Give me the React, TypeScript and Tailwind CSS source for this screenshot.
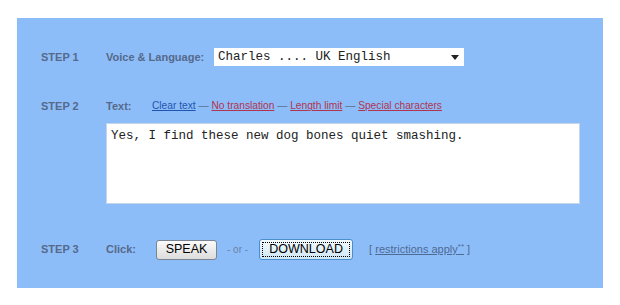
import React from 'react';

const label = "w-[65px] shrink-0 text-[11px] font-bold text-[#55698a]";

export default function App() {
  return (
    <div className="w-[620px] h-[305px] bg-white pt-[18px] pl-[17px] font-['Liberation_Sans',Arial,sans-serif]">
      <div className="w-[586px] h-[270px] bg-[#8dbdf9] pl-[24px] pt-[30px] flex flex-col">
        {/* step 1 */}
        <div className="flex items-center h-[18px]">
          <div className={label}>STEP 1</div>
          <div className="w-[108px] text-[11px] font-bold text-[#55698a]">Voice &amp; Language:</div>
          <div className="w-[250px] h-[18px] bg-white flex items-center justify-between pl-[4px] pr-[5px]">
            <span className="font-['Liberation_Mono','Courier_New',monospace] text-[12.5px] text-[#222] whitespace-pre">Charles .... UK English</span>
            <svg width="8" height="5" viewBox="0 0 8 5"><path d="M0 0h8L4 5z" fill="#222" /></svg>
          </div>
        </div>

        {/* step 2 */}
        <div className="flex items-center h-[12px] mt-[34px]">
          <div className={label}>STEP 2</div>
          <div className="w-[46px] text-[11px] font-bold text-[#55698a]">Text:</div>
          <div className="text-[10.2px] text-[#5c6f8c] whitespace-pre">
            <a className="underline text-[#1f55b0]">Clear text</a> — <a className="underline text-[#b0344f]">No translation</a> — <a className="underline text-[#b0344f]">Length limit</a> — <a className="underline text-[#b0344f]">Special characters</a>
          </div>
        </div>
        <div className="ml-[65px] mt-[11px] w-[474px] h-[81px] bg-white border border-[#c6d6ea] px-[4px] pt-[3px] font-['Liberation_Mono','Courier_New',monospace] text-[12.5px] text-[#222]">
          Yes, I find these new dog bones quiet smashing.
        </div>

        {/* step 3 */}
        <div className="flex items-center h-[21px] mt-[35px]">
          <div className={label}>STEP 3</div>
          <div className="w-[50px] text-[11px] font-bold text-[#55698a]">Click:</div>
          <button className="w-[61px] h-[20px] rounded-[3px] border border-[#7a8594] bg-gradient-to-b from-[#fbfbfb] to-[#dcdcdc] text-[12.5px] text-black leading-none">SPEAK</button>
          <span className="ml-[10px] mr-[11px] text-[10px] text-[#6a82a6]">- or -</span>
          <button className="w-[94px] h-[21px] rounded-[3px] border border-[#4a8fc9] bg-gradient-to-b from-[#f4fbfe] to-[#cfe6f4] p-[2px] leading-none">
            <span className="flex h-full items-center justify-center border border-dotted border-black text-[12.5px] text-black">DOWNLOAD</span>
          </button>
          <span className="ml-[16px] text-[11px] text-[#4d6a94] whitespace-pre">
            [ <a className="underline">restrictions apply<sup className="text-[8px]">**</sup></a> ]
          </span>
        </div>
      </div>
    </div>
  );
}
